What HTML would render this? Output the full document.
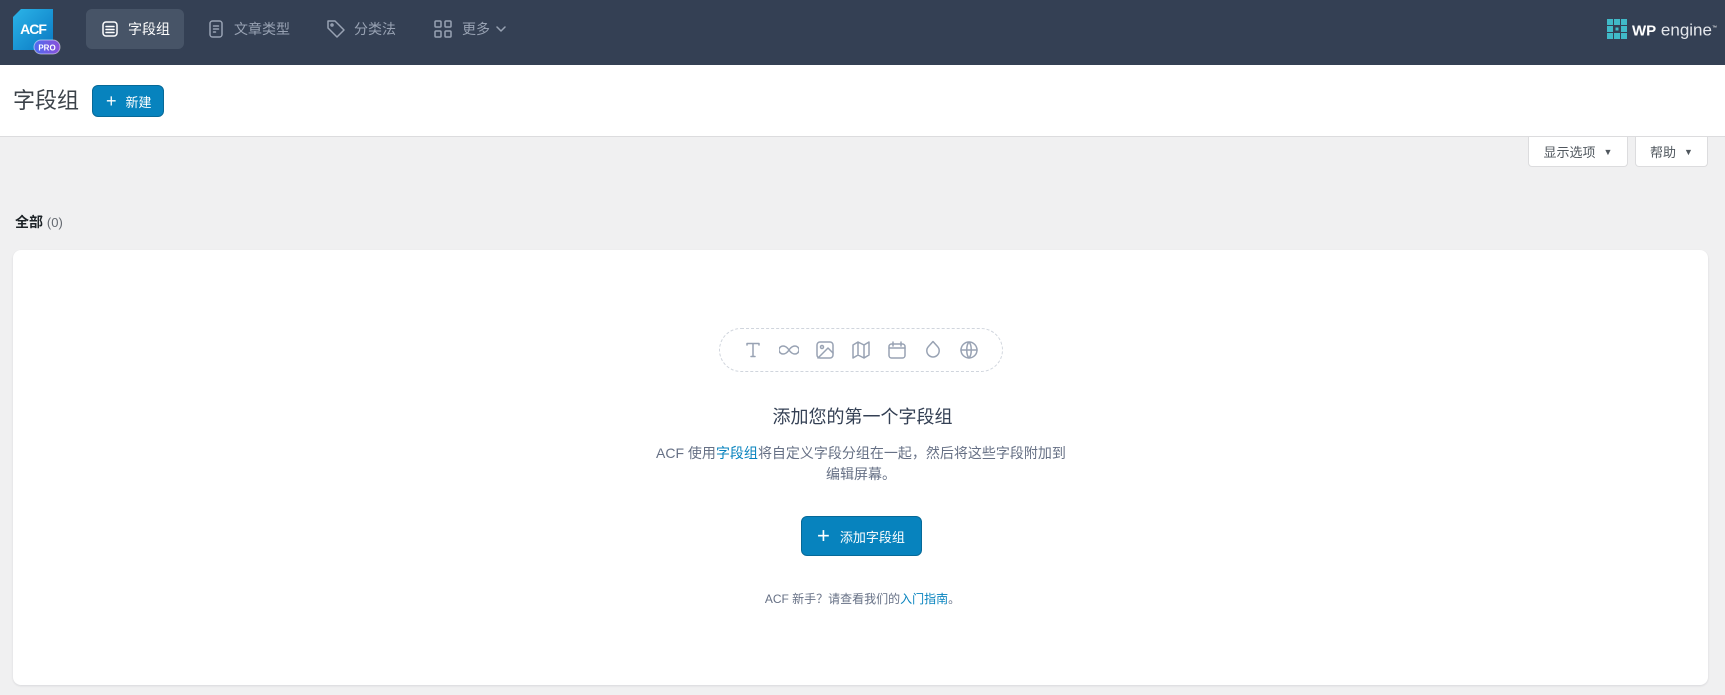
<!DOCTYPE html>
<html><head><meta charset="utf-8"><style>
*{box-sizing:border-box;margin:0;padding:0}
body{width:1725px;height:695px;overflow:hidden;background:#f0f0f1;font-family:"Liberation Sans","Noto Sans CJK SC",sans-serif;position:relative;color:#1d2327}
.hdr{position:absolute;left:0;top:0;width:1725px;height:65px;background:#344054}
.abs{position:absolute}
.tab{position:absolute;top:9px;height:40px;display:flex;align-items:center;font-size:14px;color:#98a2b3}
.tab.act{left:86px;width:98px;background:#475467;border-radius:6px;color:#fff;padding-left:42px}
.row2{position:absolute;left:0;top:65px;width:1725px;height:72px;background:#fff;border-bottom:1px solid #dcdcde}
.btn{position:absolute;background:#0783be;color:#fff;border:1px solid #066998;border-radius:6px;display:flex;align-items:center;font-size:13px}
.sbtn{position:absolute;top:137px;height:30px;background:#fff;border:1px solid #dcdcde;border-top:none;border-radius:0 0 4px 4px;font-size:13px;color:#50575e;display:flex;align-items:center;justify-content:center;gap:8px}
.card{position:absolute;left:13px;top:250px;width:1695px;height:435px;background:#fff;border-radius:8px;box-shadow:0 1px 2px rgba(16,24,40,.1)}
.pill{position:absolute;left:719px;top:328px;width:284px;height:44px;border:1.5px dashed #d0d5dd;border-radius:22px}
svg.ic{position:absolute;fill:none;stroke:#98a2b3;stroke-width:1.5;stroke-linecap:round;stroke-linejoin:round}
</style></head><body>
<div class="hdr"></div>
<svg class="abs" style="left:13px;top:9px" width="48" height="46" viewBox="0 0 48 46">
<defs><linearGradient id="g" x1="0" y1="0" x2="1" y2="1"><stop offset="0" stop-color="#2bb4e8"/><stop offset="1" stop-color="#0a78c2"/></linearGradient>
<linearGradient id="p" x1="0" y1="0" x2="1" y2="0"><stop offset="0" stop-color="#4f6cf0"/><stop offset="1" stop-color="#8a4fd8"/></linearGradient></defs>
<path d="M8 0H40V41H0V8Z" fill="url(#g)"/>
<text x="20" y="25" font-family="Liberation Sans" font-weight="bold" font-size="14" fill="#fff" text-anchor="middle" letter-spacing="-1">ACF</text>
<rect x="21" y="31" width="26" height="14" rx="7" fill="url(#p)" stroke="#fff" stroke-opacity=".5"/>
<text x="34" y="41.5" font-family="Liberation Sans" font-weight="bold" font-size="8" fill="#fff" text-anchor="middle">PRO</text>
</svg>
<div class="tab act">字段组</div>
<svg class="ic" style="left:102px;top:21px;stroke:#fff" width="16" height="16" viewBox="0 0 16 16"><rect x="1" y="1" width="14" height="14" rx="3"/><path d="M4 5.5h8M4 8.5h8M4 11.5h8"/></svg>
<svg class="ic" style="left:208px;top:20px" width="16" height="18" viewBox="0 0 16 18"><rect x="2" y="1" width="12" height="16" rx="2.5"/><path d="M5.5 6h5M5.5 9h5M5.5 12h2"/></svg>
<div class="tab" style="left:234px">文章类型</div>
<svg class="ic" style="left:326px;top:19px" width="20" height="20" viewBox="0 0 20 20"><path d="M2 2h7l9 9-7 7-9-9z"/><circle cx="6" cy="6" r="1"/></svg>
<div class="tab" style="left:354px">分类法</div>
<svg class="ic" style="left:434px;top:20px" width="18" height="18" viewBox="0 0 18 18"><rect x="1" y="1" width="6" height="6" rx="1"/><rect x="11" y="1" width="6" height="6" rx="1"/><rect x="1" y="11" width="6" height="6" rx="1"/><rect x="11" y="11" width="6" height="6" rx="1"/></svg>
<div class="tab" style="left:462px">更多</div>
<svg class="ic" style="left:496px;top:25px" width="10" height="8" viewBox="0 0 10 8"><path d="M1 2l4 4 4-4"/></svg>
<svg class="abs" style="left:1607px;top:19px" width="20" height="20" viewBox="0 0 20 20"><g fill="#40bac8"><rect x="0" y="0" width="6" height="6"/><rect x="7" y="0" width="6" height="6"/><rect x="14" y="0" width="6" height="6"/><rect x="0" y="7" width="6" height="6"/><rect x="14" y="7" width="6" height="6"/><rect x="0" y="14" width="6" height="6"/><rect x="7" y="14" width="6" height="6"/><rect x="14" y="14" width="6" height="6"/></g><rect x="8.5" y="8.5" width="3" height="3" fill="#40bac8"/></svg>
<div class="abs" style="left:1632px;top:17px;color:#fff;font-size:17px;line-height:22px"><b style="font-size:15px">WP</b> <span style="color:#e4e7ec">engine</span><sup style="font-size:5px">™</sup></div>
<div class="row2"></div>
<div class="abs" style="left:13px;top:87px;font-size:22px;color:#3c434a;line-height:28px">字段组</div>
<div class="btn" style="left:92px;top:85px;width:72px;height:32px;padding-left:13px"><span style="font-size:18px;margin-right:9px">+</span>新建</div>
<div class="sbtn" style="left:1528px;width:100px">显示选项 <span style="font-size:9px">▼</span></div>
<div class="sbtn" style="left:1635px;width:73px">帮助 <span style="font-size:9px">▼</span></div>
<div class="abs" style="left:15px;top:212px;font-size:14px"><b>全部</b> <span style="color:#646970;font-size:13px">(0)</span></div>
<div class="card"></div>
<div class="pill"></div>
<svg class="ic" style="left:745px;top:342px" width="16" height="16" viewBox="0 0 16 16"><path d="M2 3V1.5h12V3M8 1.5v13M6 14.5h4"/></svg>
<svg class="ic" style="left:779px;top:342px" width="20" height="16" viewBox="0 0 20 16"><path d="M10 8c-2-3-4-4-6-4a4 4 0 000 8c2 0 4-1 6-4s4-4 6-4a4 4 0 010 8c-2 0-4-1-6-4z"/></svg>
<svg class="ic" style="left:816px;top:341px" width="18" height="18" viewBox="0 0 18 18"><rect x="1" y="1" width="16" height="16" rx="3"/><circle cx="6" cy="6" r="1.5"/><path d="M17 12l-5-5L2 17"/></svg>
<svg class="ic" style="left:852px;top:341px" width="18" height="18" viewBox="0 0 18 18"><path d="M1 4v13l5-3 6 3 5-3V1l-5 3-6-3z M6 1v13M12 4v13"/></svg>
<svg class="ic" style="left:888px;top:341px" width="18" height="18" viewBox="0 0 18 18"><rect x="1" y="3" width="16" height="14" rx="2.5"/><path d="M1 7h16M5 1v4M13 1v4"/></svg>
<svg class="ic" style="left:925px;top:340px" width="16" height="19" viewBox="0 0 16 19"><path d="M8 1.5l4.5 5a6.2 6.2 0 11-9 0z"/></svg>
<svg class="ic" style="left:960px;top:341px" width="18" height="18" viewBox="0 0 18 18"><circle cx="9" cy="9" r="8"/><path d="M1 9h16M9 1c-3 3-3 13 0 16M9 1c3 3 3 13 0 16"/></svg>
<div class="abs" style="left:0;width:1725px;top:405px;text-align:center;font-size:18px;color:#344054;line-height:24px">添加您的第一个字段组</div>
<div class="abs" style="left:600px;width:522px;top:443px;text-align:center;font-size:14px;color:#667085;line-height:21px">ACF 使用<span style="color:#0783be">字段组</span>将自定义字段分组在一起，然后将这些字段附加到<br>编辑屏幕。</div>
<div class="btn" style="left:801px;top:516px;width:121px;height:40px;padding-left:15px;font-size:13px"><span style="font-size:22px;margin-right:10px">+</span>添加字段组</div>
<div class="abs" style="left:0;width:1725px;top:590px;text-align:center;font-size:12px;color:#667085">ACF 新手？请查看我们的<span style="color:#0783be">入门指南</span>。</div>
</body></html>
